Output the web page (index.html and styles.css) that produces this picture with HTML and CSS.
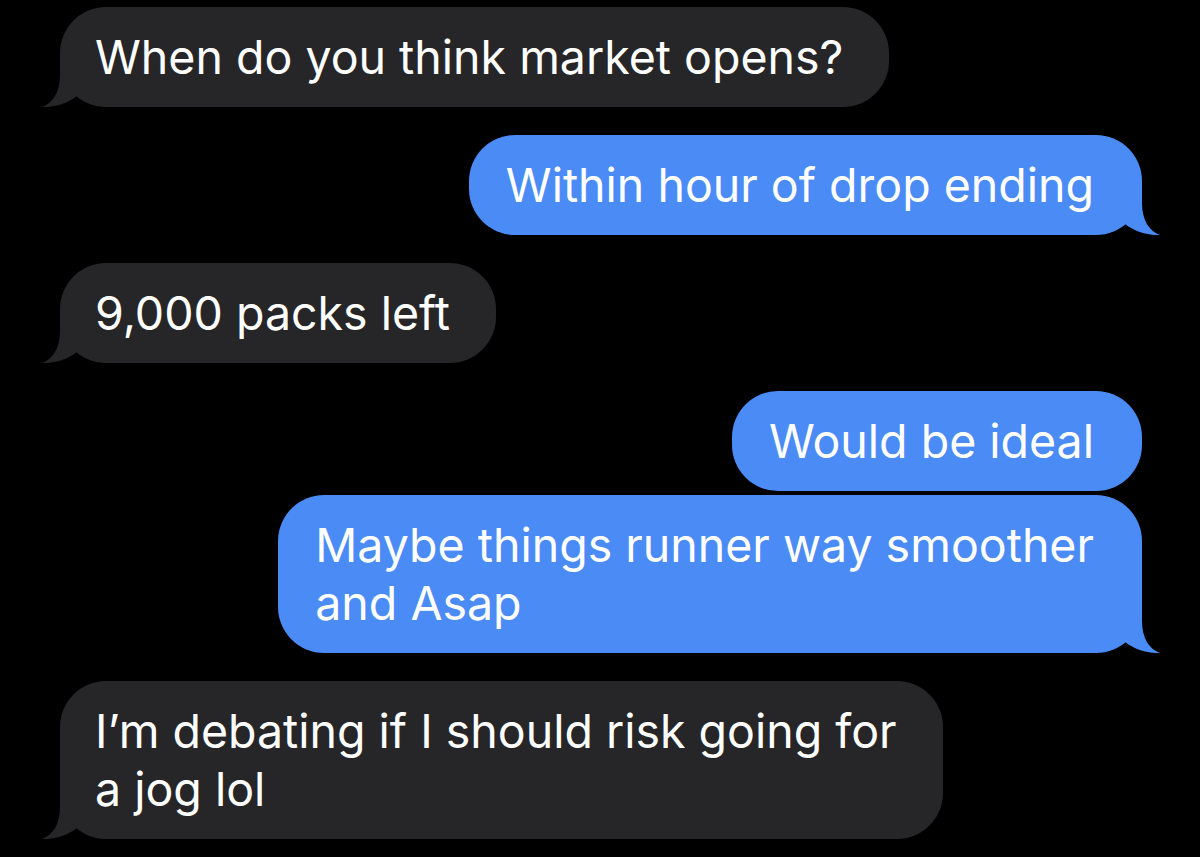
FILE: index.html
```html
<!DOCTYPE html>
<html lang="en">
<head>
    <meta charset="UTF-8">
    <meta name="viewport" content="width=device-width, initial-scale=1.0">
    <title>Messages</title>
    <link rel="stylesheet" href="styles.css">
</head>
<body>

<div class="thread">
    <div class="group in">
        <p class="bubble">When do you think market opens?<svg class="tail" viewBox="0 0 40 46"><path d="M18 0 L18 14 C18 31 11 42 0 46 C11 46.5 25 43 35 35 L40 35 L40 0 Z"/></svg></p>
    </div>

    <div class="group out">
        <p class="bubble">Within hour of drop ending<svg class="tail" viewBox="0 0 40 46"><path d="M18 0 L18 14 C18 31 11 42 0 46 C11 46.5 25 43 35 35 L40 35 L40 0 Z"/></svg></p>
    </div>

    <div class="group in">
        <p class="bubble">9,000 packs left<svg class="tail" viewBox="0 0 40 46"><path d="M18 0 L18 14 C18 31 11 42 0 46 C11 46.5 25 43 35 35 L40 35 L40 0 Z"/></svg></p>
    </div>

    <!-- two in a row, only the last one gets a tail -->
    <div class="group out">
        <p class="bubble">Would be ideal</p>
        <p class="bubble">Maybe things runner way smoother<br>and Asap<svg class="tail" viewBox="0 0 40 46"><path d="M18 0 L18 14 C18 31 11 42 0 46 C11 46.5 25 43 35 35 L40 35 L40 0 Z"/></svg></p>
    </div>

    <div class="group in">
        <p class="bubble">I’m debating if I should risk going for<br>a jog lol<svg class="tail" viewBox="0 0 40 46"><path d="M18 0 L18 14 C18 31 11 42 0 46 C11 46.5 25 43 35 35 L40 35 L40 0 Z"/></svg></p>
    </div>
</div>

</body>
</html>
```

FILE: styles.css
```css
body {
    margin: 0;
    padding: 0;
    background-color: #000;
    font-family: Inter, "Liberation Sans", Arial, sans-serif;
    color: #fff;
}
.thread {
    display: flex;
    flex-direction: column;
    gap: 28px;
    padding: 7px 58px 0 60px;
}
.group {
    display: flex;
    flex-direction: column;
    gap: 4px;
}
.group.in {
    align-items: flex-start;
}
.group.out {
    align-items: flex-end;
}
.bubble {
    position: relative;
    margin: 0;
    padding: 21px 46px 21px 35px;
    border-radius: 46px;
    font-size: 46.5px;
    line-height: 58px;
    white-space: nowrap;
}
.in .bubble {
    background-color: #262628;
    fill: #262628;
}
.out .bubble {
    background-color: #4a8bf5;
    fill: #4a8bf5;
    padding-left: 37px;
    padding-right: 48px;
}
.tail {
    position: absolute;
    bottom: 0;
    width: 40px;
    height: 46px;
}
.in .tail {
    left: -18px;
}
.out .tail {
    right: -18px;
    transform: scaleX(-1);
}
```
